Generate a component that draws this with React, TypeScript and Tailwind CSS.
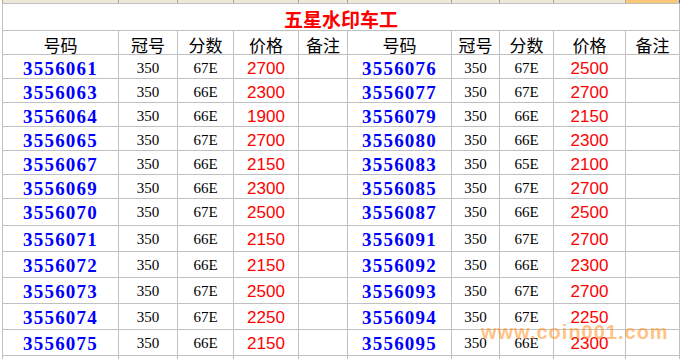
const widths = [
  "w-[116px]",
  "w-[59px]",
  "w-[56px]",
  "w-[65px]",
  "w-[49px]",
  "w-[104px]",
  "w-[48px]",
  "w-[54px]",
  "w-[72px]",
  "w-[54px]",
];

const left = [
  ["3556061", "350", "67E", "2700"],
  ["3556063", "350", "66E", "2300"],
  ["3556064", "350", "66E", "1900"],
  ["3556065", "350", "67E", "2700"],
  ["3556067", "350", "66E", "2150"],
  ["3556069", "350", "66E", "2300"],
  ["3556070", "350", "67E", "2500"],
  ["3556071", "350", "66E", "2150"],
  ["3556072", "350", "66E", "2150"],
  ["3556073", "350", "67E", "2500"],
  ["3556074", "350", "67E", "2250"],
  ["3556075", "350", "66E", "2150"],
];

const right = [
  ["3556076", "350", "67E", "2500"],
  ["3556077", "350", "67E", "2700"],
  ["3556079", "350", "66E", "2150"],
  ["3556080", "350", "66E", "2300"],
  ["3556083", "350", "65E", "2100"],
  ["3556085", "350", "67E", "2700"],
  ["3556087", "350", "66E", "2500"],
  ["3556091", "350", "67E", "2700"],
  ["3556092", "350", "66E", "2300"],
  ["3556093", "350", "67E", "2700"],
  ["3556094", "350", "67E", "2250"],
  ["3556095", "350", "66E", "2300"],
];

const rowHeights = [
  "h-[24px] pt-[4px]",
  "h-[24px] pt-[4px]",
  "h-[24px] pt-[4px]",
  "h-[24px] pt-[4px]",
  "h-[24px] pt-[4px]",
  "h-[24px] pt-[4px]",
  "h-[27px] pt-[1px]",
  "h-[26px] pt-[1px]",
  "h-[26px] pt-[1px]",
  "h-[26px] pt-[1px]",
  "h-[26px] pt-[1px]",
  "h-[26px] pt-[1px]",
];

const headers = ["号码", "冠号", "分数", "价格", "备注", "号码", "冠号", "分数", "价格", "备注"];

const cell = "flex shrink-0 items-center justify-center border-r border-b border-[#c0c0c0] leading-none";
const num = "font-['Liberation_Serif',serif] text-[19px] font-bold tracking-[1.2px] text-[#0000ff]";
const small = "font-['Liberation_Serif',serif] text-[15px] text-black";
const price = "font-['Liberation_Sans',sans-serif] text-[17px] text-[#ff0000]";

function DataRow({ l, r, h }: { l: string[]; r: string[]; h: string }) {
  const vals = [...l, "", ...r, ""];
  const styles = [num, small, small, price, "", num, small, small, price, ""];
  return (
    <div className="flex">
      {vals.map((v, i) => (
        <div key={i} className={`${cell} ${widths[i]} ${h}`}>
          <span className={styles[i]}>{v}</span>
        </div>
      ))}
    </div>
  );
}

export default function App() {
  return (
    <div className="relative h-[359px] w-[682px] overflow-hidden bg-white">
      {/* column header strip */}
      <div className="ml-[2px] flex h-[3px]">
        <div className="h-[3px] w-[1px] shrink-0 bg-[#aca899]" />
        {widths.map((w, i) => (
          <div
            key={i}
            className={`${w} h-[3px] shrink-0 border-r ${
              i === 9 ? "border-[#3a5ec9] bg-[#f8c878]" : "border-[#aca899] bg-[#ece9d8]"
            }`}
          />
        ))}
      </div>

      <div className="ml-[2px] w-[678px] border-l border-t border-[#c0c0c0]">
        <div className="flex h-[27px] w-[677px] items-center justify-center border-r border-b border-[#c0c0c0] pt-[2px]">
          <span className="font-['Noto_Sans_CJK_SC',sans-serif] text-[19px] font-bold leading-none text-[#ff0000]">
            五星水印车工
          </span>
        </div>

        <div className="flex">
          {headers.map((t, i) => (
            <div key={i} className={`${cell} ${widths[i]} h-[24px] pt-[3px]`}>
              <span className="font-['Noto_Sans_CJK_SC',sans-serif] text-[17px] text-black">{t}</span>
            </div>
          ))}
        </div>

        {left.map((l, i) => (
          <DataRow key={i} l={l} r={right[i]} h={rowHeights[i]} />
        ))}

        <div className="flex">
          {widths.map((w, i) => (
            <div key={i} className={`${cell} ${w} h-[26px]`} />
          ))}
        </div>
      </div>

      <div className="pointer-events-none absolute left-[481px] top-[322px] font-['Liberation_Sans',sans-serif] text-[20px] font-bold leading-none tracking-[1px] text-[#ff9933]/60">
        www.coin001.com
      </div>
    </div>
  );
}
